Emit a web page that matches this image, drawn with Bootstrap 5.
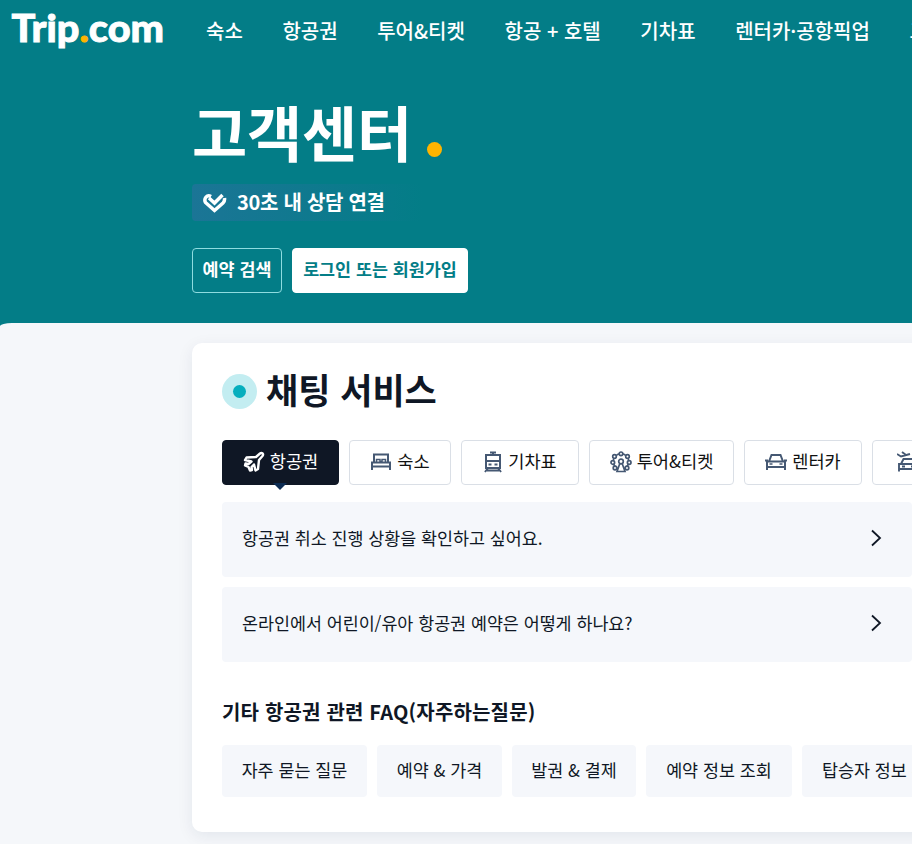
<!DOCTYPE html>
<html lang="ko">
<head>
<meta charset="utf-8">
<meta name="viewport" content="width=device-width, initial-scale=1">
<title>고객센터 | Trip.com</title>
<link rel="stylesheet" href="https://cdn.jsdelivr.net/npm/bootstrap@5.3.0/dist/css/bootstrap.min.css">
<style>
html{overflow:hidden}
body{font-family:"Noto Sans CJK KR",sans-serif;background:#037d87;color:#0f1725;height:844px;overflow:hidden;line-height:1.4}
.topbar{height:60px;padding-left:11px}
.topbar .nav-link{font-size:20px;font-weight:500;color:#fff;white-space:nowrap;padding:0;line-height:30px}
.menu{gap:39.600px;margin-left:39px;padding-top:1px}
.hero{height:263px;padding-left:192px}
.hero h1{font-size:60px;font-weight:700;line-height:80px;margin:31px 0 3px;color:#fff;letter-spacing:-.2px}
.dot{width:15px;height:15px;background:#ffb400;margin:82px 0 0 15px}
.promise{width:230px;height:37px;margin-top:10px;padding:0 0 2px 10px;gap:10px;border-radius:4px;background:linear-gradient(90deg,#1b7596,#037d87);color:#fff;font-size:20px;font-weight:700;letter-spacing:-.28px}
.actions{margin-top:27px;gap:10px}
.actions .btn{height:45px;padding:0 0 3px;font-size:17.400px;font-weight:700;border-radius:4px;line-height:38px;white-space:nowrap}
.find{width:90px;color:#fff;border:1px solid #8fdce0}
.login{width:176px;color:#037d87;background:#fff;border:1px solid #fff}
.sheet{background:#f5f7fa;height:521px;border-radius:12px 0 0 0/3px 0 0 0;padding:20px 0 0 192px}
.panel{width:750px;height:489px;background:#fff;border:0;border-radius:10px;padding:30px 30px 0;box-shadow:0 4px 16px rgba(15,41,77,.08);overflow:hidden}
.pulse{width:35px;height:35px;background:#c3edf1}
.pulse span{width:13px;height:13px;background:#06aebd}
.panel h2{font-size:35px;line-height:40px;font-weight:700;margin:-4px 0 0 9px}
.tabs{gap:10px;margin-top:31px}
.tab{height:45px;border:1px solid #dadfe6;border-radius:4px;font-size:17.600px;white-space:nowrap;gap:5px;color:#111;flex:none;position:relative;padding-bottom:3px}
.tab svg{color:#455873;flex:none;margin-top:2px}
.tab.on{background:#0f1725;border-color:#0f1725;color:#fff}
.tab.on svg{color:#fff}
.tab.on::after{content:"";position:absolute;left:50%;bottom:-6px;margin-left:-8px;border:7px solid transparent;border-top-color:#0c2b52;border-bottom:0}
.w117{width:117px}.w102{width:102px}.w118{width:118px}.w145{width:145px}.w124{width:124px}.w125{width:125px}.w146{width:146px}
.questions{gap:10px;margin-top:17px}
.question{height:75px;background:#f5f7fb;border-radius:4px;padding:0 30px 3px 20px;font-size:17.400px;letter-spacing:-.03px}
.panel h3{font-size:20px;font-weight:700;line-height:30px;margin:35px 0 18px;letter-spacing:.17px}
.chips{gap:10px}
.chip{height:52px;background:#f5f7fb;border-radius:4px;font-size:17.400px;white-space:nowrap;flex:none;padding-bottom:1px}
</style>
</head>
<body>
<header class="topbar d-flex align-items-center">
  <svg class="flex-shrink-0" width="156" height="60" role="img" aria-label="Trip.com"><text x="0.500" y="41.500" textLength="152.500" lengthAdjust="spacingAndGlyphs" font-family="Lato" font-weight="900" font-size="38" fill="#fff" stroke="#fff" stroke-width=".9">Trip<tspan fill="#ffb400" stroke="#ffb400">.</tspan>com</text></svg>
  <nav class="menu nav flex-nowrap">
    <a class="nav-link">숙소</a><a class="nav-link">항공권</a><a class="nav-link">투어&amp;티켓</a><a class="nav-link">항공 + 호텔</a><a class="nav-link">기차표</a><a class="nav-link">렌터카·공항픽업</a><a class="nav-link">고객센터</a>
  </nav>
</header>
<section class="hero d-flex flex-column">
  <div class="d-flex"><h1>고객센터</h1><span class="dot rounded-circle"></span></div>
  <div class="promise d-flex align-items-center">
    <svg class="mt-1" width="25" height="22" viewBox="0 0 25 22" fill="none" stroke="#fff" stroke-width="3.500"><path d="M20.500 2 12.500 10 7 5"/><path d="M9 3.500C5 1 1.500 5.500 3.500 9.500L12.500 17.500 21 10c1.500-1.500 1.800-3 1.500-5"/></svg>
    <span>30초 내 상담 연결</span>
  </div>
  <div class="actions d-flex"><button class="btn find">예약 검색</button><button class="btn login">로그인 또는 회원가입</button></div>
</section>
<main class="sheet">
  <div class="panel">
    <div class="d-flex align-items-center"><span class="pulse rounded-circle d-flex align-items-center justify-content-center"><span class="rounded-circle"></span></span><h2>채팅 서비스</h2></div>
    <div class="tabs d-flex">
      <div class="tab on w117 d-flex align-items-center justify-content-center">
        <svg width="22" height="22" viewBox="0 0 22 22" fill="none" stroke="currentColor" stroke-width="2.400" stroke-linejoin="round"><path d="M13 6 17 2.500c2-1.500 4 .5 2.500 2.500L16 9l-1 9-2.500 1.500-1.500-6-2.500 2.500.5 3-2 .5-1.500-3.500-3.500-1.500.5-2 3 .5L8.500 10.500 2 9l1.500-2.500z"/></svg><span>항공권</span></div>
      <div class="tab w102 d-flex align-items-center justify-content-center">
        <svg width="22" height="20" viewBox="0 0 22 20" fill="none" stroke="currentColor" stroke-width="2"><path d="M4 10V2.500h14V10M2 18v-7.500h18V18M2 14.500h18"/><path d="M6.500 10V7.500h3.500v2h2v-2h3.500V10" stroke-width="1.500"/></svg><span>숙소</span></div>
      <div class="tab w118 d-flex align-items-center justify-content-center">
        <svg width="20" height="22" viewBox="0 0 20 22" fill="none" stroke="currentColor" stroke-width="2"><path d="M3 4h14v13H3zM3 10h14M7 1.500h6M10 1v3M5 17l-3 4M15 17l3 4M4 19.500h12"/><path d="M5.500 13.500h3M11.500 13.500h3"/></svg><span>기차표</span></div>
      <div class="tab w145 d-flex align-items-center justify-content-center">
        <svg width="22" height="22" viewBox="0 0 22 22" fill="none" stroke="currentColor" stroke-width="1.700"><circle cx="11" cy="10.500" r="7.800"/><g fill="#fff"><circle cx="11" cy="2.800" r="1.800"/><circle cx="4.500" cy="5.500" r="1.800"/><circle cx="17.500" cy="5.500" r="1.800"/><circle cx="2.800" cy="11.500" r="1.800"/><circle cx="19.200" cy="11.500" r="1.800"/><circle cx="5" cy="17" r="1.800"/><circle cx="17" cy="17" r="1.800"/><path d="m10 12-3 8.500h8L12 12z"/><circle cx="11" cy="10.500" r="2.300"/></g></svg><span>투어&amp;티켓</span></div>
      <div class="tab w118 d-flex align-items-center justify-content-center">
        <svg width="22" height="18" viewBox="0 0 22 18" fill="none" stroke="currentColor" stroke-width="2"><path d="M2 17V8.500h18V17M2 14h18M4 8.500 6.500 2h9L18 8.500M0 7.500h3M19 7.500h3"/><path d="M4.500 11h3M14.500 11h3" stroke-width="1.500"/></svg><span>렌터카</span></div>
      <div class="tab w145 d-flex align-items-center justify-content-start ps-4">
        <svg width="22" height="22" viewBox="2 0 22 22" fill="none" stroke="currentColor" stroke-width="1.900"><path d="M4 20.500V13h18v7.500M4 18h18M6 13l2.500-5h9l2.500 5M2 3l4 2.500L15 3M7 1l4 3M7 15.500h3M16 15.500h3"/></svg><span>공항 픽업</span></div>
    </div>
    <div class="questions d-flex flex-column">
      <div class="question d-flex align-items-center justify-content-between"><span>항공권 취소 진행 상황을 확인하고 싶어요.</span><svg width="12" height="18" viewBox="0 0 12 18" fill="none" stroke="#0f1725" stroke-width="1.800"><path d="m2 1.500 8 7.500-8 7.500"/></svg></div>
      <div class="question d-flex align-items-center justify-content-between"><span>온라인에서 어린이/유아 항공권 예약은 어떻게 하나요?</span><svg width="12" height="18" viewBox="0 0 12 18" fill="none" stroke="#0f1725" stroke-width="1.800"><path d="m2 1.500 8 7.500-8 7.500"/></svg></div>
    </div>
    <h3>기타 항공권 관련 FAQ(자주하는질문)</h3>
    <div class="chips d-flex">
      <div class="chip w145 d-flex align-items-center justify-content-center">자주 묻는 질문</div>
      <div class="chip w125 d-flex align-items-center justify-content-center">예약 &amp; 가격</div>
      <div class="chip w124 d-flex align-items-center justify-content-center">발권 &amp; 결제</div>
      <div class="chip w146 d-flex align-items-center justify-content-center">예약 정보 조회</div>
      <div class="chip w146 d-flex align-items-center ps-3"><span class="ps-1">탑승자 정보 수정</span></div>
    </div>
  </div>
</main>
<script src="https://cdn.jsdelivr.net/npm/bootstrap@5.3.0/dist/js/bootstrap.bundle.min.js"></script>
</body>
</html>
